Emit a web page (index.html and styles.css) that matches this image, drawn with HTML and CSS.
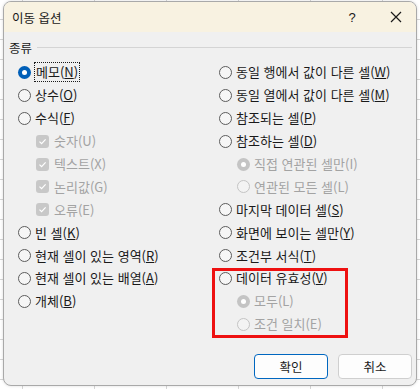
FILE: index.html
```html
<!DOCTYPE html>
<html lang="ko">
<head>
<meta charset="utf-8">
<title>이동 옵션</title>
<link rel="stylesheet" href="styles.css">
</head>
<body>
<div class="dialog">
  <div class="titlebar">
    <span class="title">이동 옵션</span>
    <span class="help">?</span>
    <span class="close"><svg width="12" height="12" viewBox="0 0 12 12"><path d="M1 1 L11 11 M11 1 L1 11" stroke="#1a1a1a" stroke-width="1.2" fill="none"/></svg></span>
  </div>
  <div class="content">
    <div class="group-head"><span>종류</span><span class="rule"></span></div>
    <div class="columns">
      <div class="col">
        <div class="row"><span class="radio on"></span><span class="label focus">메모(<u>N</u>)</span></div>
        <div class="row"><span class="radio"></span><span class="label">상수(<u>O</u>)</span></div>
        <div class="row"><span class="radio"></span><span class="label">수식(<u>F</u>)</span></div>
        <div class="row sub dis"><span class="check"><svg width="9" height="9" viewBox="0 0 9 9"><path d="M1.5 4.6 L3.6 6.7 L7.6 2.4" stroke="#fff" stroke-width="1.2" fill="none"/></svg></span><span class="label">숫자(U)</span></div>
        <div class="row sub dis"><span class="check"><svg width="9" height="9" viewBox="0 0 9 9"><path d="M1.5 4.6 L3.6 6.7 L7.6 2.4" stroke="#fff" stroke-width="1.2" fill="none"/></svg></span><span class="label">텍스트(X)</span></div>
        <div class="row sub dis"><span class="check"><svg width="9" height="9" viewBox="0 0 9 9"><path d="M1.5 4.6 L3.6 6.7 L7.6 2.4" stroke="#fff" stroke-width="1.2" fill="none"/></svg></span><span class="label">논리값(G)</span></div>
        <div class="row sub dis"><span class="check"><svg width="9" height="9" viewBox="0 0 9 9"><path d="M1.5 4.6 L3.6 6.7 L7.6 2.4" stroke="#fff" stroke-width="1.2" fill="none"/></svg></span><span class="label">오류(E)</span></div>
        <div class="row"><span class="radio"></span><span class="label">빈 셀(<u>K</u>)</span></div>
        <div class="row"><span class="radio"></span><span class="label">현재 셀이 있는 영역(<u>R</u>)</span></div>
        <div class="row"><span class="radio"></span><span class="label">현재 셀이 있는 배열(<u>A</u>)</span></div>
        <div class="row"><span class="radio"></span><span class="label">개체(<u>B</u>)</span></div>
      </div>
      <div class="col">
        <div class="row"><span class="radio"></span><span class="label">동일 행에서 값이 다른 셀(<u>W</u>)</span></div>
        <div class="row"><span class="radio"></span><span class="label">동일 열에서 값이 다른 셀(<u>M</u>)</span></div>
        <div class="row"><span class="radio"></span><span class="label">참조되는 셀(<u>P</u>)</span></div>
        <div class="row"><span class="radio"></span><span class="label">참조하는 셀(<u>D</u>)</span></div>
        <div class="row sub dis"><span class="radio on"></span><span class="label">직접 연관된 셀만(I)</span></div>
        <div class="row sub dis"><span class="radio"></span><span class="label">연관된 모든 셀(L)</span></div>
        <div class="row"><span class="radio"></span><span class="label">마지막 데이터 셀(<u>S</u>)</span></div>
        <div class="row"><span class="radio"></span><span class="label">화면에 보이는 셀만(<u>Y</u>)</span></div>
        <div class="row"><span class="radio"></span><span class="label">조건부 서식(<u>T</u>)</span></div>
        <div class="highlight">
          <div class="row"><span class="radio"></span><span class="label">데이터 유효성(<u>V</u>)</span></div>
          <div class="row sub dis"><span class="radio on"></span><span class="label">모두(L)</span></div>
          <div class="row sub dis"><span class="radio"></span><span class="label">조건 일치(E)</span></div>
          <span class="redbox"></span>
        </div>
      </div>
    </div>
    <div class="buttons">
      <button class="btn primary">확인</button>
      <button class="btn">취소</button>
    </div>
  </div>
</div>
</body>
</html>
```
FILE: styles.css
```css
html, body {
  margin: 0;
  padding: 0;
}
body {
  width: 420px;
  height: 389px;
  overflow: hidden;
  background-color: #ffffff;
  background-image:
    repeating-linear-gradient(to right, transparent 0 22px, #d6d6d6 22px 23px, transparent 23px 72px),
    repeating-linear-gradient(to bottom, transparent 0 19px, #d6d6d6 19px 20px);
  font-family: "Noto Sans CJK KR", "Noto Sans", sans-serif;
  font-size: 12px;
  color: #1a1a1a;
  padding-top: 1px;
  box-sizing: border-box;
}
.dialog {
  margin-left: 3px;
  width: 414px;
  height: 385px;
  box-sizing: border-box;
  border: 1px solid #a9a9a9;
  border-radius: 8px;
  background: #f0f0f0;
  overflow: hidden;
  display: flex;
  flex-direction: column;
  box-shadow: 0 0 3px rgba(0,0,0,0.15);
}
.titlebar {
  height: 30px;
  flex: none;
  background: #f8f2e1;
  display: flex;
  align-items: center;
  padding-left: 8px;
}
.title {
  font-size: 12.5px;
  flex: 1;
}
.help {
  width: 14px;
  text-align: center;
  font-size: 13px;
  margin-right: 31px;
  font-family: "Liberation Sans", sans-serif;
}
.close {
  width: 12px;
  height: 12px;
  margin-right: 14px;
  display: flex;
}
.content {
  flex: 1;
  display: flex;
  flex-direction: column;
}
.group-head {
  display: flex;
  align-items: center;
  height: 30px;
  padding-left: 5px;
  padding-right: 4px;
  gap: 5px;
  font-size: 12.5px;
}
.rule {
  flex: 1;
  height: 1px;
  background: #d4d4d4;
}
.columns {
  display: grid;
  grid-template-columns: 201px 1fr;
  padding-left: 14px;
  margin-top: -1px;
}
.col {
  display: flex;
  flex-direction: column;
}
.row {
  height: 22.9px;
  display: flex;
  align-items: center;
  gap: 4px;
  white-space: nowrap;
  font-size: 13px;
  line-height: 18px;
}
.row.sub {
  padding-left: 18px;
}
.dis {
  color: #a3a3a3;
}
.label u {
  text-decoration-thickness: 1px;
  text-underline-offset: 1px;
}
.label.focus {
  outline: 1px dotted #1a1a1a;
  outline-offset: 0px;
  padding: 0 1px;
}
.radio {
  width: 13px;
  height: 13px;
  box-sizing: border-box;
  border: 1px solid #5c5c5c;
  border-radius: 50%;
  background: #f6f6f6;
  flex: none;
  position: relative;
}
.radio.on {
  border: none;
  background: #005fb8;
}
.radio.on::after {
  content: "";
  position: absolute;
  left: 4px;
  top: 4px;
  width: 5px;
  height: 5px;
  border-radius: 50%;
  background: #fff;
}
.dis .radio {
  border-color: #c4c4c4;
  background: #f3f3f3;
}
.dis .radio.on {
  background: #c4c4c4;
}
.check {
  width: 13px;
  height: 13px;
  border-radius: 3px;
  background: #c8c8c8;
  flex: none;
  display: flex;
  align-items: center;
  justify-content: center;
  margin-right: 1px;
}
.highlight {
  position: relative;
  display: flex;
  flex-direction: column;
}
.redbox {
  position: absolute;
  left: -7px;
  top: 1px;
  width: 136px;
  height: 70px;
  box-sizing: border-box;
  border: 3px solid #ee1111;
}
.buttons {
  margin-top: auto;
  display: flex;
  justify-content: flex-end;
  gap: 10px;
  padding: 0 4px 6px 0;
}
.btn {
  width: 74px;
  height: 25px;
  box-sizing: border-box;
  border: 1px solid #cfcfcf;
  border-radius: 4px;
  background: #fdfdfd;
  font-family: "Noto Sans CJK KR", sans-serif;
  font-size: 12.5px;
  color: #1a1a1a;
  padding: 0;
}
.btn.primary {
  border-color: #0067c0;
}
```
